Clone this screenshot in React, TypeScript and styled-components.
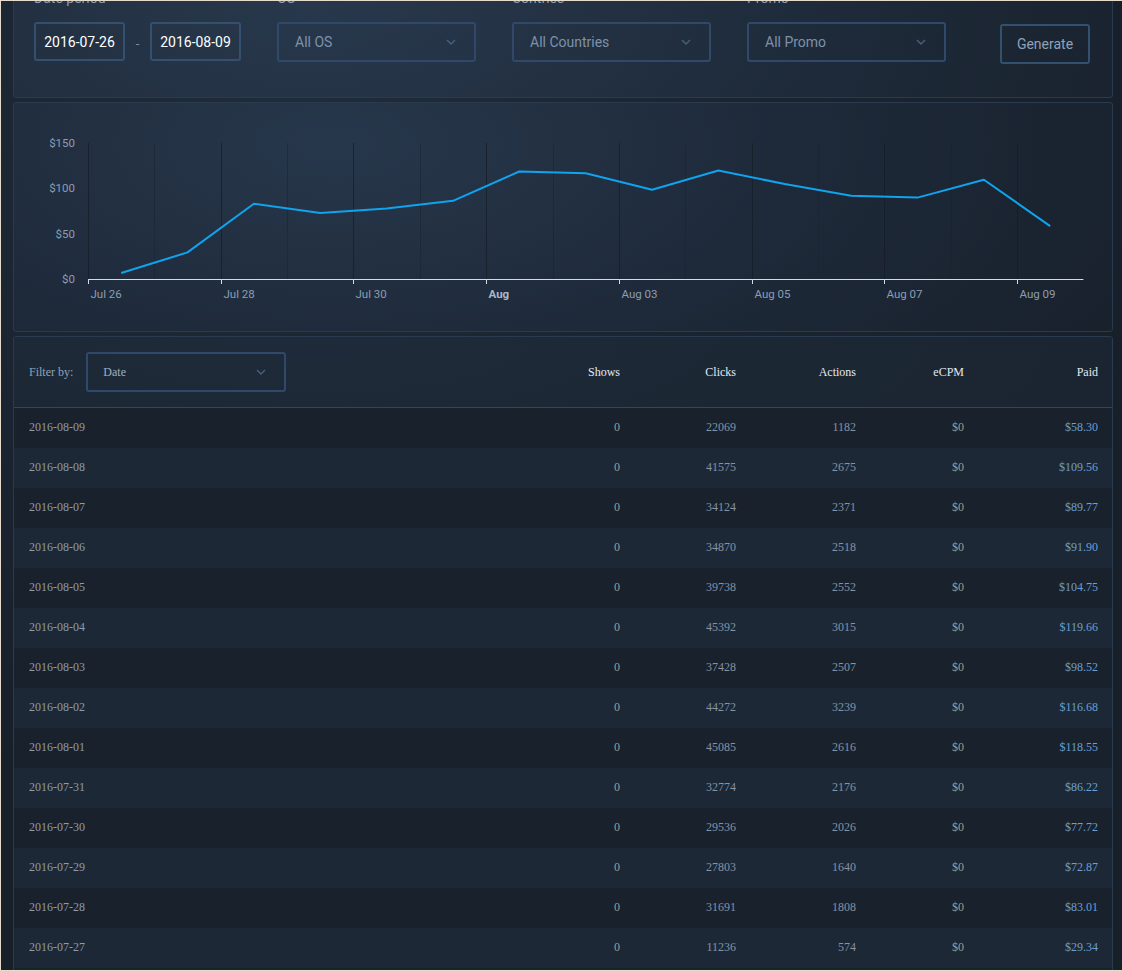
import React from "react";
import styled, { createGlobalStyle } from "styled-components";

const GlobalStyle = createGlobalStyle`
  html, body {
    margin: 0;
    padding: 0;
    overflow: hidden;
    background: #e7dccb;
  }
  * { box-sizing: border-box; }
`;

const Frame = styled.div`
  width: 1122px;
  height: 971px;
  border-top: 1px solid #e7dccb;
  border-left: 1px solid #e7dccb;
  border-bottom: 1px solid #e7dccb;
  overflow: hidden;
  background: radial-gradient(ellipse 900px 700px at 300px 120px, #1f2c3b 0%, #1a2430 55%, #171f29 100%);
`;

const Page = styled.div`
  margin-top: -31px;
  padding: 0 9px 0 12px;
  display: flex;
  flex-direction: column;
  gap: 4px;
`;

const Panel = styled.section`
  border: 1px solid #2a3b50;
  border-radius: 3px;
  background: radial-gradient(ellipse 900px 420px at 300px 40px, #28384c 0%, #1f2c3c 50%, #19212c 100%);
`;

const FilterPanel = styled(Panel)`
  height: 128px;
  padding: 17px 0 0 20px;
  display: flex;
  align-items: flex-start;
  gap: 36px;
  font-family: Roboto, "Open Sans", sans-serif;
`;

const Group = styled.div`
  display: flex;
  flex-direction: column;
  gap: 14px;
`;

const Label = styled.div`
  height: 20px;
  line-height: 20px;
  font-size: 14px;
  color: #8d9fb4;
`;

const DateRow = styled.div`
  display: flex;
  align-items: center;
`;

const DateInput = styled.div`
  width: 91px;
  height: 39px;
  border: 2px solid #34506f;
  border-radius: 3px;
  color: #ffffff;
  font-size: 14px;
  display: flex;
  align-items: center;
  justify-content: center;
`;

const Dash = styled.span`
  width: 25px;
  text-align: center;
  color: #7d90a6;
  font-size: 13px;
  padding-top: 4px;
`;

const SelectBox = styled.div<{ $serif?: boolean }>`
  width: ${(p) => (p.$serif ? 200 : 199)}px;
  height: 40px;
  border: 2px solid #30496a;
  border-radius: 3px;
  display: flex;
  align-items: center;
  justify-content: space-between;
  padding: 0 18px 0 ${(p) => (p.$serif ? 15 : 16)}px;
  color: ${(p) => (p.$serif ? "#9fb1c4" : "#7d92aa")};
  font-size: ${(p) => (p.$serif ? 12 : 14)}px;
  font-family: ${(p) =>
    p.$serif ? '"Liberation Serif", "Times New Roman", serif' : 'Roboto, "Open Sans", sans-serif'};
`;

const GenerateButton = styled.button`
  margin-top: 36px;
  margin-left: 18px;
  width: 90px;
  height: 40px;
  border: 2px solid #34506f;
  border-radius: 3px;
  background: transparent;
  color: #8da2ba;
  font-family: Roboto, "Open Sans", sans-serif;
  font-size: 14px;
  padding: 0;
`;

const Chevron = () => (
  <svg width="10" height="6" viewBox="0 0 10 6">
    <polyline points="1,1 5,5 9,1" fill="none" stroke="#46617f" strokeWidth="1.4" />
  </svg>
);

const ChartPanel = styled(Panel)`
  height: 230px;
  background: radial-gradient(ellipse 900px 420px at 320px 40px, #27374b 0%, #1e2a3a 50%, #18202b 100%);
`;

const ChartSvg = styled.svg`
  display: block;
  font-family: Roboto, "Open Sans", sans-serif;
`;

const TablePanel = styled(Panel)`
  background: #19212c;
  font-family: "Liberation Serif", "Times New Roman", serif;
  font-size: 12px;
  overflow: hidden;
`;

const cols = "1fr 120px 116px 120px 108px 134px";

const HeaderRow = styled.div`
  display: grid;
  grid-template-columns: ${cols};
  align-items: center;
  height: 71px;
  padding: 0 14px 0 15px;
  border-bottom: 1px solid #2d4763;
  background: radial-gradient(ellipse 800px 200px at 300px 0px, #1f2b3a 0%, #1c2734 60%, #1b2531 100%);
`;

const FilterCell = styled.div`
  display: flex;
  align-items: center;
  gap: 13px;
`;

const FilterLabel = styled.span`
  color: #8ea2b8;
`;

const HeadCell = styled.div`
  text-align: right;
  color: #e4e9ef;
`;

const Row = styled.div<{ $alt: boolean }>`
  display: grid;
  grid-template-columns: ${cols};
  align-items: center;
  height: 40px;
  padding: 0 14px 2px 15px;
  background: ${(p) => (p.$alt ? "#1c2836" : "#19212c")};
`;

const Cell = styled.div<{ $kind?: "date" | "num" | "paid" | "zero" }>`
  text-align: ${(p) => (p.$kind === "date" ? "left" : "right")};
  color: ${(p) =>
    p.$kind === "paid"
      ? "#6c9fd2"
      : p.$kind === "zero"
      ? "#9c9e95"
      : p.$kind === "date"
      ? "#8d9bab"
      : "#8593a3"};
`;

type Rec = { date: string; clicks: number; actions: number; paid: number };

const data: Rec[] = [
  { date: "2016-08-09", clicks: 22069, actions: 1182, paid: 58.3 },
  { date: "2016-08-08", clicks: 41575, actions: 2675, paid: 109.56 },
  { date: "2016-08-07", clicks: 34124, actions: 2371, paid: 89.77 },
  { date: "2016-08-06", clicks: 34870, actions: 2518, paid: 91.9 },
  { date: "2016-08-05", clicks: 39738, actions: 2552, paid: 104.75 },
  { date: "2016-08-04", clicks: 45392, actions: 3015, paid: 119.66 },
  { date: "2016-08-03", clicks: 37428, actions: 2507, paid: 98.52 },
  { date: "2016-08-02", clicks: 44272, actions: 3239, paid: 116.68 },
  { date: "2016-08-01", clicks: 45085, actions: 2616, paid: 118.55 },
  { date: "2016-07-31", clicks: 32774, actions: 2176, paid: 86.22 },
  { date: "2016-07-30", clicks: 29536, actions: 2026, paid: 77.72 },
  { date: "2016-07-29", clicks: 27803, actions: 1640, paid: 72.87 },
  { date: "2016-07-28", clicks: 31691, actions: 1808, paid: 83.01 },
  { date: "2016-07-27", clicks: 11236, actions: 574, paid: 29.34 },
  { date: "2016-07-26", clicks: 2512, actions: 129, paid: 6.62 },
];

// chart geometry (relative to chart panel inner box)
const OX = 74;
const DAY = 66.36;
const AXIS_Y = 176;
const TOP_Y = 40;
const PX_PER = (AXIS_Y - TOP_Y) / 150;

const Chart = () => {
  const series = [...data].reverse();
  const pts = series
    .map((d, i) => `${(OX + DAY * (i + 0.5)).toFixed(1)},${(AXIS_Y - d.paid * PX_PER).toFixed(1)}`)
    .join(" ");
  const grid = Array.from({ length: 16 }, (_, i) => Math.round(OX + DAY * i) + 0.5);
  const yLabels = [
    { v: 150, t: "$150" },
    { v: 100, t: "$100" },
    { v: 50, t: "$50" },
    { v: 0, t: "$0" },
  ];
  const xLabels = ["Jul 26", "Jul 28", "Jul 30", "Aug", "Aug 03", "Aug 05", "Aug 07", "Aug 09"];
  return (
    <ChartSvg width="1097" height="228" viewBox="0 0 1097 228">
      {grid.map((x, i) => (
        <line
          key={i}
          x1={x}
          x2={x}
          y1={TOP_Y}
          y2={AXIS_Y}
          stroke={i % 2 === 0 ? "#151c25" : "#1a2330"}
          strokeWidth="1"
          opacity={i % 2 === 0 ? 0.7 : 0.5}
        />
      ))}
      {yLabels.map((l) => (
        <text
          key={l.t}
          x={61}
          y={AXIS_Y - l.v * PX_PER + 1}
          textAnchor="end"
          dominantBaseline="middle"
          fontSize="11.5"
          fill="#8c9db2"
        >
          {l.t}
        </text>
      ))}
      <line x1={OX} x2={OX + DAY * 15} y1={AXIS_Y + 0.5} y2={AXIS_Y + 0.5} stroke="#d5dbe2" strokeWidth="1" />
      {xLabels.map((t, i) => {
        const x = Math.round(OX + DAY * 2 * i) + 0.5;
        return (
          <g key={t}>
            <line x1={x} x2={x} y1={AXIS_Y} y2={AXIS_Y + 5} stroke="#d5dbe2" strokeWidth="1" />
            <text
              x={x + 2}
              y={AXIS_Y + 16}
              dominantBaseline="middle"
              fontSize="11.5"
              fontWeight={t === "Aug" ? 700 : 400}
              fill={t === "Aug" ? "#a9b8c9" : "#8c9db2"}
            >
              {t}
            </text>
          </g>
        );
      })}
      <polyline points={pts} fill="none" stroke="#10a3ee" strokeWidth="2" strokeLinejoin="round" />
    </ChartSvg>
  );
};

export default function App() {
  return (
    <>
      <GlobalStyle />
      <Frame>
        <Page>
          <FilterPanel>
            <Group>
              <Label>Date period</Label>
              <DateRow>
                <DateInput>2016-07-26</DateInput>
                <Dash>-</Dash>
                <DateInput>2016-08-09</DateInput>
              </DateRow>
            </Group>
            <Group>
              <Label>OS</Label>
              <SelectBox>
                <span>All OS</span>
                <Chevron />
              </SelectBox>
            </Group>
            <Group>
              <Label>Contries</Label>
              <SelectBox>
                <span>All Countries</span>
                <Chevron />
              </SelectBox>
            </Group>
            <Group>
              <Label>Promo</Label>
              <SelectBox>
                <span>All Promo</span>
                <Chevron />
              </SelectBox>
            </Group>
            <GenerateButton>Generate</GenerateButton>
          </FilterPanel>

          <ChartPanel>
            <Chart />
          </ChartPanel>

          <TablePanel>
            <HeaderRow>
              <FilterCell>
                <FilterLabel>Filter by:</FilterLabel>
                <SelectBox $serif>
                  <span>Date</span>
                  <Chevron />
                </SelectBox>
              </FilterCell>
              <HeadCell>Shows</HeadCell>
              <HeadCell>Clicks</HeadCell>
              <HeadCell>Actions</HeadCell>
              <HeadCell>eCPM</HeadCell>
              <HeadCell>Paid</HeadCell>
            </HeaderRow>
            {data.map((d, i) => (
              <Row key={d.date} $alt={i % 2 === 1}>
                <Cell $kind="date">{d.date}</Cell>
                <Cell $kind="zero">0</Cell>
                <Cell>{d.clicks}</Cell>
                <Cell>{d.actions}</Cell>
                <Cell $kind="zero">$0</Cell>
                <Cell $kind="paid">${d.paid.toFixed(2)}</Cell>
              </Row>
            ))}
          </TablePanel>
        </Page>
      </Frame>
    </>
  );
}
